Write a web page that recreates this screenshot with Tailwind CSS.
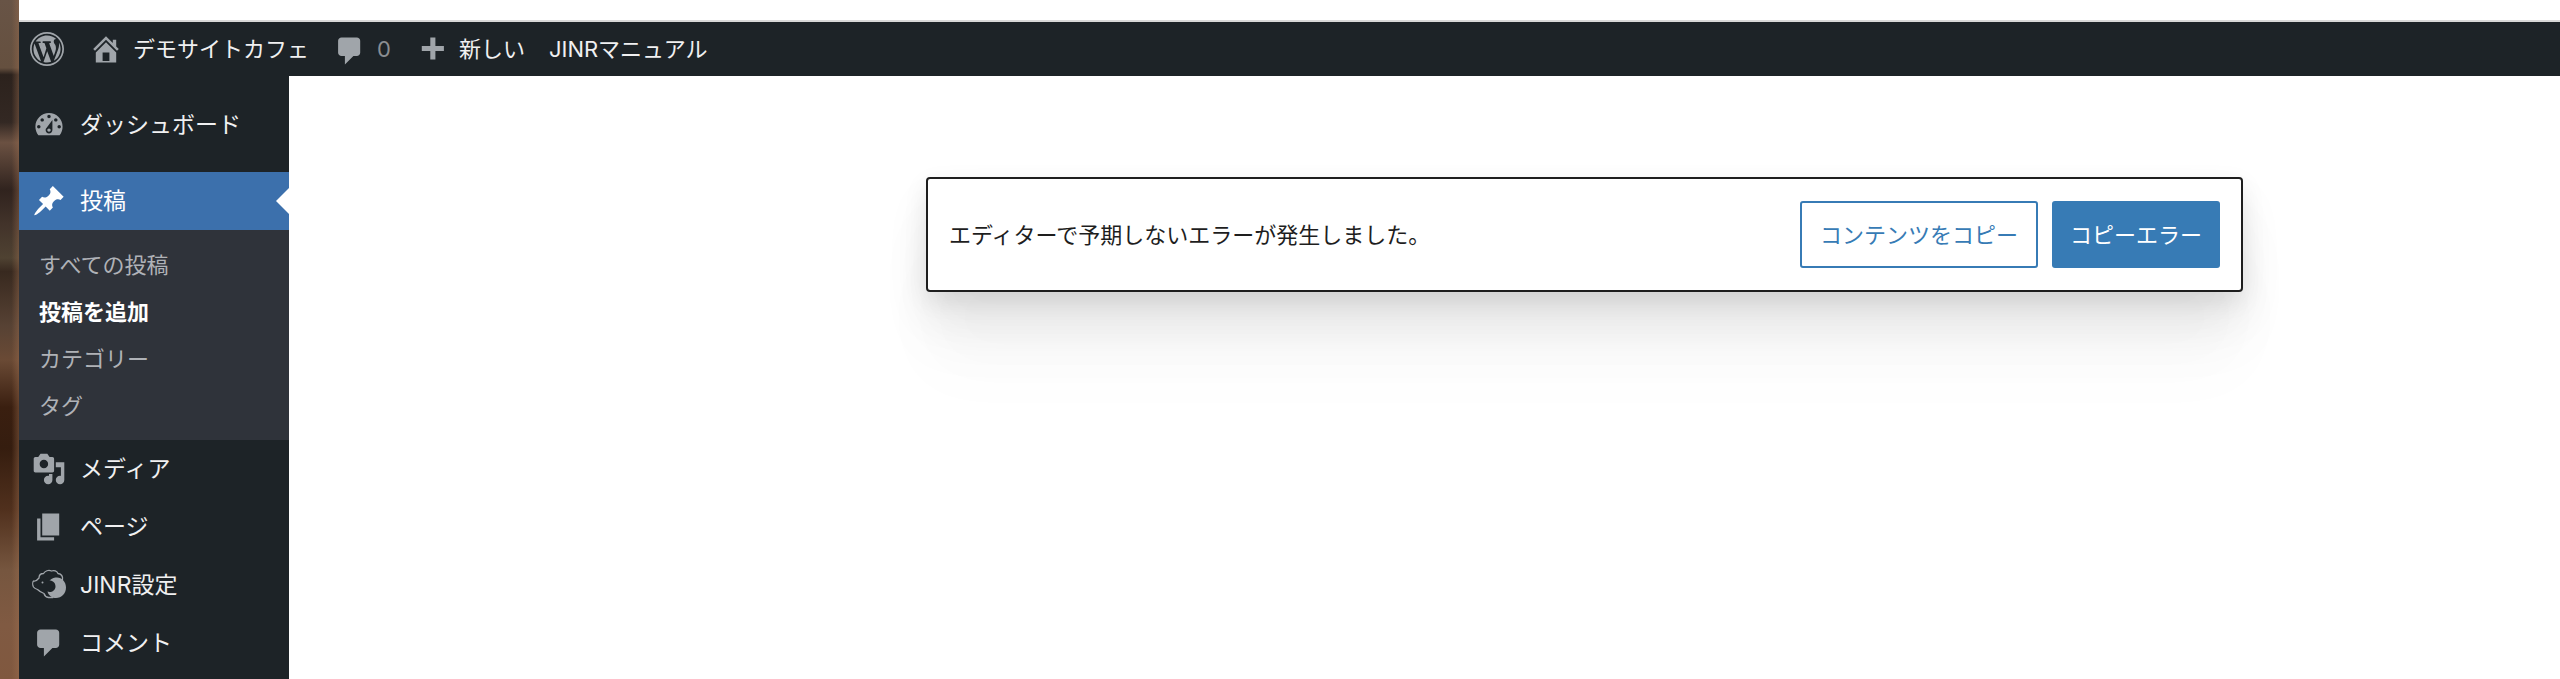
<!DOCTYPE html>
<html lang="ja">
<head>
  <meta charset="UTF-8" />
  <meta name="viewport" content="width=device-width, initial-scale=1.0" />
  <title>投稿を追加 ‹ デモサイトカフェ — WordPress</title>
  <script src="https://cdn.jsdelivr.net/npm/@tailwindcss/browser@4"></script>
</head>
<body class="flex min-h-screen overflow-hidden bg-white font-['Inter','Noto_Sans_CJK_JP',sans-serif] text-[22px] leading-8 text-[#f0f0f1]">
  <!-- desktop showing beside the window -->
  <div class="w-[19px] shrink-0 bg-[linear-gradient(90deg,transparent_60%,#a0705066),linear-gradient(180deg,#685446_0%,#65503f_10%,#2c221d_11%,#332823_18%,#6b5142_21%,#30231e_28%,#42332a_33%,#4f4232_38%,#38291f_40%,#574234_48%,#6a4a35_53%,#3a1f10_60%,#351d0f_66%,#50301d_75%,#76563f_84%,#805a42_92%,#80583f_100%)]"></div>

  <div class="flex min-w-0 flex-1 flex-col">
    <div class="h-[22px] shrink-0 border-b-2 border-[#d8d8d8] bg-white"></div>

    <!-- admin bar -->
    <header class="h-[54px] shrink-0 bg-[#1d2327]">
      <nav class="flex h-full items-center whitespace-nowrap pl-[11px]" aria-label="ツールバー">
        <a href="#" aria-label="WordPress について" class="mr-[25px]">
          <svg class="size-[34px] fill-[#a0a5aa]" viewBox="0 0 20 20"><path d="M20 10c0-5.52-4.48-10-10-10S0 4.48 0 10s4.48 10 10 10 10-4.48 10-10zM10 1.01c4.97 0 8.99 4.02 8.99 8.99s-4.02 8.99-8.99 8.99S1.01 14.97 1.01 10 5.03 1.01 10 1.01zM8.01 14.82L4.96 6.61c.49-.03 1.05-.08 1.05-.08.43-.05.38-1.01-.06-.99 0 0-1.29.1-2.13.1-.15 0-.33 0-.52-.01 1.44-2.17 3.9-3.6 6.7-3.6 2.09 0 3.99.79 5.41 2.09-.6-.08-1.45.35-1.45 1.42 0 .66.38 1.22.79 1.88.31.54.5 1.22.5 2.21 0 1.34-1.27 4.48-1.27 4.48l-2.71-7.5c.48-.03.75-.16.75-.16.43-.05.38-1.1-.05-1.08 0 0-1.3.11-2.14.11-.78 0-2.11-.11-2.11-.11-.43-.02-.48 1.06-.05 1.08l.84.08 1.12 3.04zm6.02 2.15L16.64 10s.67-1.69.39-3.81c.63 1.14.94 2.42.94 3.81 0 2.96-1.56 5.58-3.94 6.97zM2.68 6.77L6.5 17.25c-2.67-1.3-4.47-4.08-4.47-7.25 0-1.16.2-2.23.65-3.23zm7.45 4.53l2.29 6.25c-.75.27-1.57.42-2.42.42-.72 0-1.41-.11-2.06-.3z"/></svg>
        </a>
        <a href="#" class="mr-6 flex items-center gap-[10px]">
          <svg class="size-[34px] fill-[#a0a5aa]" viewBox="0 0 20 20"><path d="M16 8.5l1.53 1.53-1.06 1.06L10 4.6l-6.47 6.49-1.06-1.06L10 2.5l4 4v-2h2v4zm-6-2.46l6 5.99V18H4v-5.97zM12 17v-5H8v5h4z"/></svg>
          <span>デモサイトカフェ</span>
        </a>
        <a href="#" class="mr-6 flex items-center gap-[10px]">
          <svg class="mt-1 size-[34px] fill-[#a0a5aa]" viewBox="0 0 20 20"><path d="M5 2h9q.82 0 1.41.59T16 4v7q0 .82-.59 1.41T14 13h-2l-5 5v-5H5q-.82 0-1.41-.59T3 11V4q0-.82.59-1.41T5 2z"/></svg>
          <span class="text-[#8a8e92]">0</span>
        </a>
        <a href="#" class="mr-6 flex items-center gap-[10px]">
          <svg class="mt-1 size-[34px] fill-[#a0a5aa]" viewBox="0 0 20 20"><path d="M17 7v3h-5v5H9v-5H4V7h5V2h3v5h5z"/></svg>
          <span>新しい</span>
        </a>
        <a href="#">JINRマニュアル</a>
      </nav>
    </header>

    <div class="flex flex-1">
      <!-- admin menu -->
      <nav class="w-[270px] shrink-0 bg-[#1d2327] pt-5" aria-label="メインメニュー">
        <ul class="text-[23px]">
          <li class="mb-[18px]">
            <a href="#" class="flex h-[58px] items-center gap-[14px] pl-[13px]">
              <svg class="size-[34px] fill-[#a0a5aa]" viewBox="0 0 20 20"><path d="M3.76 16h12.48c1.1-1.37 1.76-3.11 1.76-5 0-4.42-3.58-8-8-8s-8 3.58-8 8c0 1.89.66 3.63 1.76 5zM10 4c.55 0 1 .45 1 1s-.45 1-1 1-1-.45-1-1 .45-1 1-1zM6 6c.55 0 1 .45 1 1s-.45 1-1 1-1-.45-1-1 .45-1 1-1zm8 0c.55 0 1 .45 1 1s-.45 1-1 1-1-.45-1-1 .45-1 1-1zm-5.37 5.55L12 7v6c0 1.1-.9 2-2 2s-2-.9-2-2c0-.57.24-1.08.63-1.45zM4 10c.55 0 1 .45 1 1s-.45 1-1 1-1-.45-1-1 .45-1 1-1zm12 0c.55 0 1 .45 1 1s-.45 1-1 1-1-.45-1-1 .45-1 1-1zm-5 3c0-.55-.45-1-1-1s-1 .45-1 1 .45 1 1 1 1-.45 1-1z"/></svg>
              ダッシュボード
            </a>
          </li>
          <li>
            <a href="#" class="relative flex h-[58px] items-center gap-[14px] bg-[#3c70ac] pl-[13px] text-white">
              <svg class="size-[34px] fill-white" viewBox="0 0 20 20"><path d="M10.44 3.02l1.82-1.82 6.36 6.35-1.83 1.82c-1.05-.68-2.48-.57-3.41.36l-.75.75c-.92.93-1.04 2.35-.35 3.41l-1.83 1.82-2.41-2.41-2.8 2.79c-.42.42-3.38 2.71-3.8 2.29s1.86-3.39 2.28-3.81l2.79-2.79L4.1 9.36l1.83-1.82c1.05.69 2.48.57 3.4-.36l.75-.75c.93-.92 1.05-2.35.36-3.41z"/></svg>
              投稿
              <span class="absolute right-0 top-4 border-y-[13px] border-r-[13px] border-y-transparent border-r-white"></span>
            </a>
            <ul class="bg-[#2f333a] py-[11px] text-[22px] text-[#afb2b7]">
              <li><a href="#" class="flex h-[47px] items-center pl-5">すべての投稿</a></li>
              <li><a href="#" class="flex h-[47px] items-center pl-5 font-bold text-white" aria-current="page">投稿を追加</a></li>
              <li><a href="#" class="flex h-[47px] items-center pl-5">カテゴリー</a></li>
              <li><a href="#" class="flex h-[47px] items-center pl-5">タグ</a></li>
            </ul>
          </li>
          <li>
            <a href="#" class="flex h-[58px] items-center gap-[14px] pl-[13px]">
              <svg class="size-[34px] fill-[#a0a5aa]" viewBox="0 0 20 20"><path d="M13 11V4c0-.55-.45-1-1-1h-1.67L9 1H5L3.67 3H2c-.55 0-1 .45-1 1v7c0 .55.45 1 1 1h10c.55 0 1-.45 1-1zM7 4.5c1.38 0 2.5 1.12 2.5 2.5S8.38 9.5 7 9.5 4.5 8.38 4.5 7 5.62 4.5 7 4.5zM14 6h5v10.5c0 1.38-1.12 2.5-2.5 2.5S14 17.88 14 16.5s1.12-2.5 2.5-2.5c.17 0 .34.02.5.05V9h-3V6zm-4 8.05V13h2v3.5c0 1.38-1.12 2.5-2.5 2.5S7 17.88 7 16.5 8.12 14 9.5 14c.17 0 .34.02.5.05z"/></svg>
              メディア
            </a>
          </li>
          <li>
            <a href="#" class="flex h-[58px] items-center gap-[14px] pl-[13px]">
              <svg class="size-[34px] fill-[#a0a5aa]" viewBox="0 0 20 20"><path d="M6 15V2h10v13H6zm-1 1h8v2H3V5h2v11z"/></svg>
              ページ
            </a>
          </li>
          <li>
            <a href="#" class="flex h-[58px] items-center gap-[14px] pl-[13px]">
              <svg class="size-[34px]" viewBox="0 0 34 34" fill="none" stroke="#a0a5aa" stroke-width="1.3" stroke-linejoin="round" stroke-linecap="round">
                <path d="M30.500 11.500C31 8 29 6 26 5.500 25 3 22 2 19.500 3 16.500 1.500 13 3 11.500 5.500 8.500 5.500 7 7.500 7 10 5 12.500 3 13.500 1.500 13 .5 14 .5 17 1.500 19 2.500 20.500 4 21 5.500 21.500 7.500 23.500 9.500 24.500 12 25.500 12.500 27.500 14 29 16.500 29.500L21 29.500"/>
                <circle cx="10.500" cy="14.500" r="1" fill="#a0a5aa" stroke="none"/>
                <path d="M17.500 12.500C20 10 23 9.500 25 9.500 30 9.500 34 14 34 19.500 34 25.500 29.500 30 24 30 20 30 16.500 27.500 15.500 23.500 18.500 25 23.500 23 23.500 18.500 23.500 15 21 12.500 17.500 12.500Z" fill="#a0a5aa" stroke="none"/>
              </svg>
              JINR設定
            </a>
          </li>
          <li>
            <a href="#" class="flex h-[58px] items-center gap-[14px] pl-[13px]">
              <svg class="size-[34px] fill-[#a0a5aa]" viewBox="0 0 20 20"><path d="M5 2h9q.82 0 1.41.59T16 4v7q0 .82-.59 1.41T14 13h-2l-5 5v-5H5q-.82 0-1.41-.59T3 11V4q0-.82.59-1.41T5 2z"/></svg>
              コメント
            </a>
          </li>
        </ul>
      </nav>

      <!-- editor -->
      <main class="min-w-0 flex-1 bg-white pl-[637px] pr-[317px] pt-[101px]">
        <div class="flex items-center gap-[14px] rounded-[4px] border-2 border-[#1e1e1e] bg-white px-[21px] py-[22px] shadow-[0_8px_25px_rgba(0,0,0,0.08),0_25px_44px_rgba(0,0,0,0.07),0_49px_59px_rgba(0,0,0,0.04),0_82px_70px_rgba(0,0,0,0.02)]" role="alert">
          <p class="flex-1 text-[#1e1e1e]">エディターで予期しないエラーが発生しました。</p>
          <button type="button" class="h-[67px] rounded-[3px] border-2 border-[#377bb5] px-[18px] text-[#377bb5]">コンテンツをコピー</button>
          <button type="button" class="h-[67px] rounded-[3px] bg-[#377bb5] px-[18px] text-white">コピーエラー</button>
        </div>
      </main>
    </div>
  </div>
</body>
</html>
